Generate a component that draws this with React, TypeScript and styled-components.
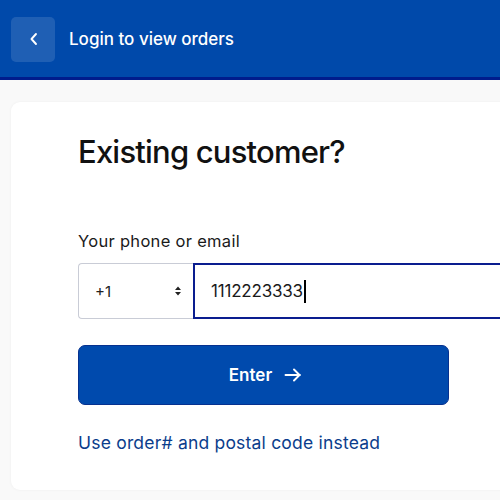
import React, { useState } from 'react';
import styled, { createGlobalStyle } from 'styled-components';

const GlobalStyle = createGlobalStyle`
    html, body {
        margin: 0;
        padding: 0;
        background: #f7f7f7;
        font-family: Inter, 'Noto Sans', sans-serif;
        overflow: hidden;
    }
`;

export default function App() {
    const [phone, setPhone] = useState('1112223333');

    return (
        <>
            <GlobalStyle />
            <Page>
                <Header>
                    <BackBtn aria-label="Back">
                        <svg width="12" height="14" viewBox="0 0 12 14" fill="none">
                            <path d="M8 2 3.5 7 8 12" stroke="#fff" strokeWidth="1.9" strokeLinecap="round" strokeLinejoin="round" />
                        </svg>
                    </BackBtn>
                    <HeaderTitle>Login to view orders</HeaderTitle>
                </Header>
                <Main>
                    <Card>
                        <Title>Existing customer?</Title>
                        <Label>Your phone or email</Label>
                        <InputRow>
                            <CountrySelect>
                                <span>+1</span>
                                <svg width="8" height="12" viewBox="0 0 8 12">
                                    <path d="M1 5h6L4 1.5z M1 7h6l-3 3.5z" fill="#222" />
                                </svg>
                            </CountrySelect>
                            <PhoneField>
                                <PhoneInput value={phone} onChange={(e) => setPhone(e.target.value)} />
                                <CaretLayer aria-hidden="true">
                                    <Ghost>{phone}</Ghost>
                                    <Caret />
                                </CaretLayer>
                            </PhoneField>
                        </InputRow>
                        <EnterBtn>
                            Enter
                            <svg width="18" height="16" viewBox="0 0 18 16" fill="none">
                                <path d="M1.5 8h14.5M10 2.5 15.5 8 10 13.5" stroke="#fff" strokeWidth="1.9" strokeLinecap="round" strokeLinejoin="round" />
                            </svg>
                        </EnterBtn>
                        <AltLink href="#">Use order# and postal code instead</AltLink>
                    </Card>
                </Main>
            </Page>
        </>
    );
}

const Page = styled.div`
    width: 500px;
    height: 500px;
    overflow: clip;
    display: flex;
    flex-direction: column;
`;

const Header = styled.header`
    height: 77px;
    flex-shrink: 0;
    background: #0049aa;
    border-bottom: 3px solid #001c8c;
    display: flex;
    align-items: center;
    padding-left: 11px;
    gap: 14px;
`;

const BackBtn = styled.button`
    width: 44px;
    height: 45px;
    margin-top: 1px;
    border: none;
    border-radius: 5px;
    background: rgba(255, 255, 255, 0.12);
    display: flex;
    align-items: center;
    justify-content: center;
    padding: 0 0 0 1px;
    cursor: pointer;
`;

const HeaderTitle = styled.h1`
    margin: 0;
    color: #fff;
    font-size: 17px;
    font-weight: 500;
    letter-spacing: 0;
`;

const Main = styled.main`
    flex: 1;
    padding: 22px 0 10px 11px;
    background: #f9f9f9;
    overflow: clip;
`;

const Card = styled.section`
    width: 560px;
    height: 388px;
    box-sizing: border-box;
    background: #fff;
    border-radius: 9px;
    box-shadow: 0 0 3px rgba(0, 0, 0, 0.05);
    padding: 30px 0 0 67px;
    display: flex;
    flex-direction: column;
    overflow: clip;
`;

const Title = styled.h2`
    margin: 0;
    font-size: 31px;
    line-height: 40px;
    font-weight: 500;
    color: #111;
    letter-spacing: -0.8px;
`;

const Label = styled.label`
    margin-top: 59px;
    font-size: 16.5px;
    line-height: 20px;
    color: #1a1a1a;
    letter-spacing: 0.3px;
`;

const InputRow = styled.div`
    margin-top: 12px;
    display: flex;
    height: 56px;
`;

const CountrySelect = styled.div`
    width: 115px;
    box-sizing: border-box;
    border: 1px solid #c9ccd6;
    border-right: none;
    border-radius: 4px 0 0 4px;
    display: flex;
    align-items: center;
    justify-content: space-between;
    padding: 0 11px 0 16px;
    font-size: 15px;
    color: #222;
`;

const PhoneField = styled.div`
    position: relative;
    width: 330px;
    display: flex;
`;

const PhoneInput = styled.input`
    width: 100%;
    box-sizing: border-box;
    border: 2px solid #0a1d8f;
    border-radius: 0;
    padding: 0 0 0 16px;
    font-family: Inter, sans-serif;
    font-size: 17px;
    color: #1a1a1a;
    letter-spacing: -0.2px;
    outline: none;
`;

const CaretLayer = styled.div`
    position: absolute;
    inset: 0;
    padding-left: 18px;
    display: flex;
    align-items: center;
    pointer-events: none;
    font-size: 17px;
    letter-spacing: -0.2px;
`;

const Ghost = styled.span`
    visibility: hidden;
    white-space: pre;
`;

const Caret = styled.span`
    width: 2px;
    height: 23px;
    margin-left: 1px;
    background: #000;
`;

const EnterBtn = styled.button`
    margin-top: 26px;
    width: 371px;
    height: 60px;
    border: 1px solid #06318f;
    border-radius: 7px;
    background: #004aad;
    color: #fff;
    font-family: Inter, sans-serif;
    font-size: 17px;
    font-weight: 600;
    display: flex;
    align-items: center;
    justify-content: center;
    gap: 12px;
    padding: 0 0 0 4px;
    cursor: pointer;
`;

const AltLink = styled.a`
    margin-top: 27px;
    font-size: 17.5px;
    line-height: 22px;
    color: #0b3d8c;
    text-decoration: none;
    letter-spacing: 0.2px;
`;
